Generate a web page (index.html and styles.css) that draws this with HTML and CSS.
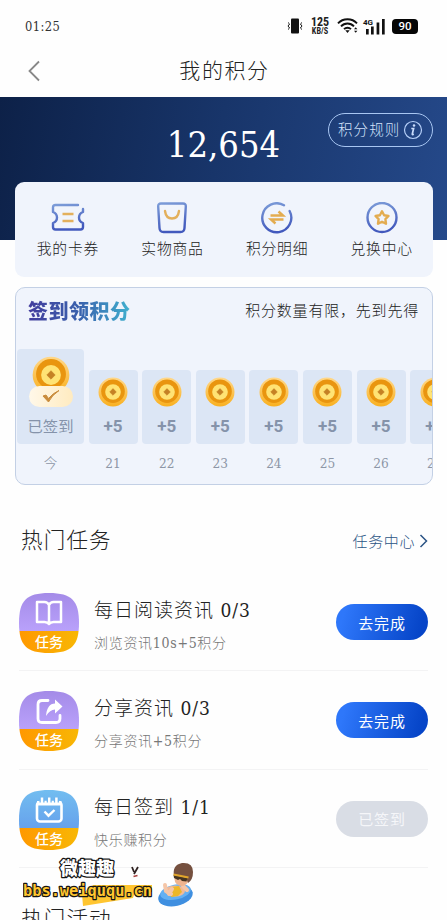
FILE: index.html
```html
<!DOCTYPE html>
<html lang="zh-CN">
<head>
<meta charset="utf-8">
<meta name="viewport" content="width=device-width, initial-scale=1">
<title>我的积分</title>
<link rel="stylesheet" href="styles.css">
</head>
<body>
<svg class="defs" width="0" height="0" aria-hidden="true">
  <defs>
    <linearGradient id="line" x1="0" y1="0" x2="0.2" y2="1"><stop offset="0" stop-color="#7c9cd8"/><stop offset="1" stop-color="#4259bd"/></linearGradient>
    <linearGradient id="gold" x1="0" y1="0" x2="0" y2="1"><stop offset="0" stop-color="#ffd88a"/><stop offset="1" stop-color="#f9b01f"/></linearGradient>
    <linearGradient id="orange" x1="0" y1="0" x2="1" y2="0"><stop offset="0" stop-color="#ff9800"/><stop offset="1" stop-color="#f8b705"/></linearGradient>
    <linearGradient id="purple" x1="0" y1="0" x2="0" y2="1"><stop offset="0" stop-color="#a48be8"/><stop offset="1" stop-color="#b9a1fb"/></linearGradient>
    <linearGradient id="sky" x1="0" y1="0" x2="0" y2="1"><stop offset="0" stop-color="#72bdf0"/><stop offset="1" stop-color="#67a2ec"/></linearGradient>
    <linearGradient id="pale" x1="0" y1="0" x2="1" y2="0"><stop offset="0" stop-color="#fff8e9"/><stop offset="1" stop-color="#ffebc0"/></linearGradient>
    <clipPath id="blob"><path d="M30 0C53 0 60 8 60 30S53 60 30 60 0 52 0 30 7 0 30 0Z"/></clipPath>
    <symbol id="coin" viewBox="0 0 30 30">
      <circle cx="15" cy="15" r="14.5" fill="url(#gold)"/>
      <circle cx="15" cy="14.2" r="11.8" fill="#e9950f"/>
      <circle cx="15" cy="15" r="7.8" fill="#ffe374"/>
      <path d="M15 11.6 18.3 15 15 18.3 11.7 15Z" fill="#c58124" stroke="#c58124" stroke-width=".5"/>
    </symbol>
  </defs>
</svg>

<header class="status">
  <span class="time">01:25</span>
  <div class="status-icons">
    <svg class="vibrate" width="16" height="16" viewBox="0 0 16 16"><rect x="4" y=".5" width="8" height="15" rx="1" fill="#111"/><path d="M1 4.500l1.600 1.500L1 8l1.600 2L1 11.500M15 4.500 13.400 6 15 8l-1.600 2 1.600 1.500" fill="none" stroke="#111"/></svg>
    <div class="speed"><b>125</b><span>KB/S</span></div>
    <svg class="wifi" width="21" height="16" viewBox="0 0 21 16"><path d="M1 5.300C6-.2 15-.2 20 5.300M4 8.300c3.500-3.800 9.500-3.800 13 0M7 11.200c2-2 5-2 7 0" fill="none" stroke="#111" stroke-width="1.900"/><path d="M8.300 12.200h4.400L10.500 15ZM17 11.300l1.700-2 1.700 2ZM17 12.800l1.700 2 1.700-2Z" fill="#111"/></svg>
    <svg class="signal" width="22" height="17" viewBox="0 0 22 17"><text x="-1" y="6.500" class="net">4G</text><path d="M2 11h2.700v5.500H2ZM7 8.500h2.700v8H7ZM12.600 4.500h2.700v12h-2.700ZM18 1h2.700v15.500H18Z" fill="#111"/></svg>
    <span class="battery">90</span>
  </div>
</header>

<nav class="nav">
  <svg class="back" width="14" height="22" viewBox="0 0 14 22"><path d="M12 1.500 2.500 11l9.500 9.500" fill="none" stroke="#888" stroke-width="1.800"/></svg>
  <h1>我的积分</h1>
</nav>

<main>
  <section class="hero">
    <strong class="points">12,654</strong>
    <a class="rules"><span>积分规则</span><svg width="20" height="20" viewBox="0 0 20 20"><circle cx="10" cy="10" r="8.500" fill="none" stroke="#b5cff8" stroke-width="1.200"/><path d="M8.300 8.500h2.300L9.300 14q-.2 1 1.500.2" fill="none" stroke="#c9dcfb" stroke-width="1.700"/><circle cx="11" cy="5.600" r="1.250" fill="#c9dcfb"/></svg></a>
  </section>

  <section class="shortcuts">
    <a><svg width="34" height="32" viewBox="0 0 34 32"><path d="M27 3H4.500Q2 3 2 5.500V10q4 1.500 4 5.500T2 21v4q0 2.500 2.500 2.500h25Q32 27.500 32 25v-4q-4-1.500-4-5.500T32 10V7" fill="none" stroke="url(#line)" stroke-width="2.400" stroke-linecap="round" stroke-linejoin="round"/><path d="M11.500 12h11M11.500 19h11" stroke="#e3b05c" stroke-width="2.400"/></svg><span>我的卡券</span></a>
    <a><svg width="34" height="32" viewBox="0 0 34 32"><path d="M6 1.500h22q3 0 2.800 3L29.500 26q-.2 4-4 4h-17q-3.800 0-4-4L3.200 4.500q-.2-3 2.800-3Z" fill="none" stroke="url(#line)" stroke-width="2.400"/><path d="M10 9q1 7.500 7 7.500T24 9" fill="none" stroke="#e3b05c" stroke-width="2.400" stroke-linecap="round"/></svg><span>实物商品</span></a>
    <a><svg width="34" height="32" viewBox="0 0 34 32"><path d="M24 3.200A14.500 14.500 0 1 0 29.600 9" fill="none" stroke="url(#line)" stroke-width="2.400" stroke-linecap="round"/><path d="M10.500 13.500h12.500l-4.500-4M23.500 17.500H11l4.500 4" fill="none" stroke="#e3ac50" stroke-width="2.400"/></svg><span>积分明细</span></a>
    <a><svg width="34" height="32" viewBox="0 0 34 32"><circle cx="17" cy="15.500" r="14.500" fill="none" stroke="url(#line)" stroke-width="2.400"/><path d="m17 9.300 2.100 4 4.400.7-3.100 3.200.6 4.500-4-2-4 2 .6-4.500-3.100-3.200 4.400-.7Z" fill="none" stroke="#e3ac50" stroke-width="2.400" stroke-linejoin="round"/></svg><span>兑换中心</span></a>
  </section>

  <section class="checkin">
    <div class="checkin-head"><h2>签到领积分</h2><p>积分数量有限，先到先得</p></div>
    <div class="days">
      <div class="day today"><div class="tile">
        <svg width="46" height="52" viewBox="0 0 46 52"><use href="#coin" x="4" y="0" width="38" height="38"/><rect x="1" y="30" width="44" height="21" rx="10.500" fill="url(#pale)"/><path d="m15 40 5.500 6Q24 39 31 34.500 25 37 20.500 42.500L18 39Z" fill="#c98c3c" stroke="#c98c3c"/></svg>
        <span>已签到</span></div><time>今</time></div>
      <div class="day"><div class="tile"><svg width="30" height="30"><use href="#coin"/></svg><b>+5</b></div><time>21</time></div>
      <div class="day"><div class="tile"><svg width="30" height="30"><use href="#coin"/></svg><b>+5</b></div><time>22</time></div>
      <div class="day"><div class="tile"><svg width="30" height="30"><use href="#coin"/></svg><b>+5</b></div><time>23</time></div>
      <div class="day"><div class="tile"><svg width="30" height="30"><use href="#coin"/></svg><b>+5</b></div><time>24</time></div>
      <div class="day"><div class="tile"><svg width="30" height="30"><use href="#coin"/></svg><b>+5</b></div><time>25</time></div>
      <div class="day"><div class="tile"><svg width="30" height="30"><use href="#coin"/></svg><b>+5</b></div><time>26</time></div>
      <div class="day"><div class="tile"><svg width="30" height="30"><use href="#coin"/></svg><b>+5</b></div><time>27</time></div>
    </div>
  </section>

  <section class="tasks">
    <div class="section-head"><h2>热门任务</h2><a>任务中心<svg width="9" height="14" viewBox="0 0 9 14"><path d="m1.500 1 6 6-6 6" fill="none" stroke="#2b5485" stroke-width="1.500"/></svg></a></div>

    <article class="task">
      <svg class="badge" width="60" height="60" viewBox="0 0 60 60"><g clip-path="url(#blob)"><path d="M0 0h60v38H0Z" fill="url(#purple)"/><path d="M0 38h60v22H0Z" fill="url(#orange)"/></g><path d="M30 12q-1.500-3-4.500-3H18v20h7.500q3 0 4.500 2 1.500-2 4.500-2H42V9h-7.500q-3 0-4.500 3Zm0 0v18" fill="none" stroke="#fff" stroke-width="2.500" stroke-linejoin="round"/><text x="30" y="53.500">任务</text></svg>
      <div class="info"><h3>每日阅读资讯 0/3</h3><p>浏览资讯10s+5积分</p></div>
      <button>去完成</button>
    </article>
    <article class="task">
      <svg class="badge" width="60" height="60" viewBox="0 0 60 60"><g clip-path="url(#blob)"><path d="M0 0h60v38H0Z" fill="url(#purple)"/><path d="M0 38h60v22H0Z" fill="url(#orange)"/></g><path d="M29 9.500h-6q-4 0-4 4v14q0 4 4 4h14q4 0 4-4v-3" fill="none" stroke="#fff" stroke-width="2.800" stroke-linecap="round"/><path d="M27 25q1-12.500 9-12.500V8.500l7.500 7-7.500 7V18.500q-5 0-9 6.500Z" fill="#fff"/><text x="30" y="53.500">任务</text></svg>
      <div class="info"><h3>分享资讯 0/3</h3><p>分享资讯+5积分</p></div>
      <button>去完成</button>
    </article>
    <article class="task">
      <svg class="badge" width="60" height="60" viewBox="0 0 60 60"><g clip-path="url(#blob)"><path d="M0 0h60v38H0Z" fill="url(#sky)"/><path d="M0 38h60v22H0Z" fill="url(#orange)"/></g><rect x="18" y="12" width="24.500" height="19.500" rx="3" fill="none" stroke="#fff" stroke-width="2.600"/><path d="M18 11h24.500v4.500H18Z" fill="#fff"/><path d="M23 7.500v5M30.200 7.500v5M37.400 7.500v5" stroke="#6cb2ee" stroke-width="5"/><path d="M23 7.500v6M30.200 7.500v6M37.400 7.500v6" stroke="#fff" stroke-width="2.500"/><path d="m25.500 21.500 4 4.200 6-5.700" fill="none" stroke="#fff" stroke-width="2.400"/><text x="30" y="53.500">任务</text></svg>
      <div class="info"><h3>每日签到 1/1</h3><p>快乐赚积分</p></div>
      <button disabled>已签到</button>
    </article>
  </section>

  <section class="activities"><h2>热门活动</h2></section>
</main>

<aside class="stamp">
  <svg width="180" height="64" viewBox="0 0 180 64">
    <path d="M59 40 70 31h59v7l-18 3-1 3-50 8Z" fill="#ffc52f"/>
    <text class="stamp-name" x="37" y="21" textLength="54">微趣趣</text>
    <text class="stamp-url" x="0" y="42" textLength="129" lengthAdjust="spacingAndGlyphs">bbs.weiququ.cn</text>
    <path d="m109 13 2 5M115 13l-4 7" stroke="#302323" stroke-width="1.800"/>
    <path d="M110.500 22.500l4-1" stroke="#a8403f" stroke-width="1.800"/>
    <ellipse cx="152.500" cy="42" rx="17.500" ry="10" fill="#3f8fe0" transform="rotate(-12 152.500 42)"/>
    <ellipse cx="152.500" cy="38" rx="15.500" ry="7.500" fill="#64b0f2" transform="rotate(-12 152.500 38)"/>
    <ellipse cx="152" cy="37" rx="10" ry="5.500" fill="#f1b998"/>
    <path d="m148 33 8-1 3 6-4 4-7 1Z" fill="#edb728"/>
    <path d="m142 31 1 6 5 3M149 35l-3 5M160 32l4 4" fill="none" stroke="#f5c6a8" stroke-width="4" stroke-linecap="round"/>
    <circle cx="158.500" cy="25" r="7" fill="#efb48f"/>
    <path d="M151 22q-2-11 8-13 11-1 11 9 0 8-5 11l-2-6Z" fill="#75503f"/>
    <path d="m150.500 21 14 3-1 3.500-4.500-.5-2-2-2 1-4-2Z" fill="#453421"/><path d="m150.500 20.500 15 3" stroke="#e0a52b" stroke-width="1.800"/>
  </svg>
</aside>
</body>
</html>
```
FILE: styles.css
```css
* { box-sizing: border-box; margin: 0; padding: 0; }

html, body { height: 920px; overflow: hidden; }

body {
  position: relative;
  background: #fefefe;
  color: #222;
  font-family: "DejaVu Serif Condensed", "DejaVu Serif", "Noto Sans CJK SC", serif;
  font-stretch: condensed;
  font-weight: 300;
}

h1, h2, h3 { font-weight: 300; }
svg { display: block; flex: none; }
.defs { position: absolute; }

.status {
  height: 48px;
  padding: 4px 29px 0 25px;
  display: flex;
  align-items: center;
  justify-content: space-between;
}
.time { font-size: 12.8px; color: #333; letter-spacing: .4px; }
.status-icons { display: flex; align-items: center; }
.vibrate { margin-right: 7px; }
.speed {
  width: 20px;
  display: flex;
  flex-direction: column;
  align-items: center;
  gap: 1px;
  font-family: Roboto, sans-serif;
  color: #222;
}
.speed b { font-size: 12px; line-height: 9px; font-weight: 700; }
.speed span { font-size: 8.2px; line-height: 7px; font-weight: 700; }
.wifi { margin-left: 7px; }
.signal { margin-left: 6px; overflow: visible; }
.net { font: 700 8px Roboto, sans-serif; fill: #111; }
.battery {
  width: 26px;
  height: 15px;
  margin-left: 6px;
  border-radius: 4px;
  background: #050505;
  color: #fff;
  font: 500 11.5px/15px Roboto, sans-serif;
  text-align: center;
}

.nav {
  height: 49px;
  padding: 0 27px;
  display: grid;
  grid-template-columns: 14px 1fr 14px;
  align-items: center;
}
.nav h1 { text-align: center; font-size: 21px; letter-spacing: 1.6px; line-height: 44px; padding: 0 0 3px 2px; }
.back { margin-bottom: 3px; }

.hero {
  height: 143px;
  padding: 16px 14px 0;
  display: grid;
  grid-template-columns: 1fr auto 1fr;
  align-items: start;
  background: linear-gradient(100deg, #0d2148 0%, #18356a 48%, #25498a 100%);
}
.points {
  grid-column: 2;
  color: #fff;
  font-size: 36px;
  font-weight: 400;
  line-height: 64px;
}
.rules {
  justify-self: end;
  width: 105px;
  height: 34px;
  padding-left: 9px;
  display: flex;
  align-items: center;
  gap: 3px;
  border: 1.3px solid #a8c6f2;
  border-radius: 17px;
  color: #d3e2fb;
  font-size: 14.5px;
  line-height: 28px;
  letter-spacing: 1.1px;
  white-space: nowrap;
}

.shortcuts {
  position: relative;
  width: 418px;
  height: 95px;
  margin: -58px 0 0 15px;
  padding: 20px 0 0 .6px;
  display: grid;
  grid-template-columns: repeat(4, 104.6px);
  border-radius: 9px;
  background: #f0f4fc;
}
.shortcuts a { display: flex; flex-direction: column; align-items: center; font-size: 14.8px; letter-spacing: .8px; line-height: 29px; }

.checkin {
  width: 418px;
  height: 198px;
  margin: 10px 0 0 15px;
  padding: 10px 0 0 1px;
  border: 1.5px solid #c3d0e5;
  border-radius: 10px;
  background: #f0f4fc;
  overflow: hidden;
}
.checkin-head { height: 26px; padding: 0 13px 0 11px; display: flex; align-items: center; justify-content: space-between; }
.checkin-head h2 {
  font: 900 20px/26px "Noto Sans CJK SC", sans-serif;
  letter-spacing: .5px;
  background: linear-gradient(90deg, #433d9d, #3961ad 50%, #40b1cf);
  background-clip: text;
  color: transparent;
}
.checkin-head p { font-size: 15px; line-height: 22px; padding-bottom: 1px; letter-spacing: .8px; }
.days { height: 136px; margin-top: 14px; display: flex; gap: 4.6px; align-items: flex-end; }
.day { flex: none; width: 49px; display: flex; flex-direction: column; align-items: center; }
.today { width: 67px; }
.tile {
  width: 100%;
  height: 74px;
  padding-top: 7px;
  display: flex;
  flex-direction: column;
  align-items: center;
  border-radius: 4px;
  background: #dce6f5;
  color: #8593aa;
}
.tile b { font: 700 17px/22px Roboto, sans-serif; margin-top: 8px; }
.today .tile { height: 95px; }
.today .tile span { font: 400 15.3px/22px "Noto Sans CJK SC", sans-serif; margin-top: 6px; }
.day time { height: 30px; padding-top: 4px; font-size: 13.5px; line-height: 30px; color: #8d96a6; }

.section-head { height: 68px; margin-top: 20px; padding: 0 19px 0 21px; display: flex; align-items: center; justify-content: space-between; }
.section-head h2 { font-size: 21.5px; line-height: 30px; padding-top: 3px; letter-spacing: 1.2px; }
.section-head a { display: flex; align-items: center; gap: 4px; padding-top: 3px; font-size: 15px; letter-spacing: .6px; color: #2b5485; }
.task {
  height: 98.3px;
  margin: 0 19px;
  padding-top: 20px;
  display: flex;
  align-items: flex-start;
  border-bottom: 1px solid #f3f3f4;
}
.badge text { font: 500 14px "Noto Sans CJK SC", sans-serif; fill: #fff; text-anchor: middle; }
.info { flex: 1; padding-left: 15px; white-space: nowrap; }
.info h3 { font-size: 19px; letter-spacing: 1px; line-height: 34px; }
.info p { font-size: 14px; letter-spacing: .7px; line-height: 22px; margin-top: 5px; color: #777; }
.task button {
  width: 92px;
  height: 36px;
  margin-top: 11px;
  border: 0;
  border-radius: 18px;
  background: linear-gradient(105deg, #2e77fa 10%, #0645c8 90%);
  color: #fff;
  font: 400 15px "Noto Sans CJK SC", sans-serif;
  letter-spacing: .8px;
}
.task button:disabled { background: #d9dde5; color: #f5f6f9; }
.activities { padding: 37px 21px 0; }
.activities h2 { font-size: 21.5px; letter-spacing: 1.2px; line-height: 30px; }

.stamp { position: absolute; left: 23px; top: 854px; }
.stamp text { paint-order: stroke; stroke: #151515; stroke-linejoin: round; }
.stamp-name { font: 900 18px "Noto Sans CJK SC", sans-serif; fill: #fff; stroke-width: 2.5px; }
.stamp-url { font: 700 16px "DejaVu Sans Mono", monospace; fill: #ffc52f; stroke-width: 2.5px; }
```
